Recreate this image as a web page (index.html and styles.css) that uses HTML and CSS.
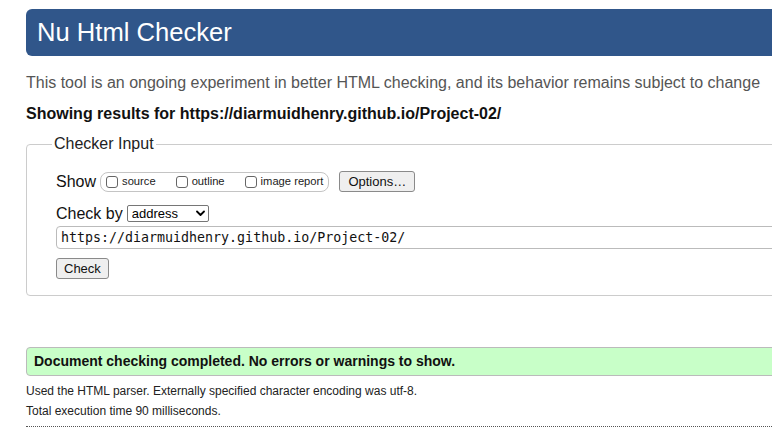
FILE: index.html
```html
<!DOCTYPE html>
<html lang="en">
<head>
<meta charset="utf-8">
<title>Nu Html Checker</title>
<link rel="stylesheet" href="styles.css">
</head>
<body>
<div class="page">
  <h1 class="banner">Nu Html Checker</h1>
  <p class="about">This tool is an ongoing experiment in better HTML checking, and its behavior remains subject to change</p>
  <p class="showing">Showing results for https://diarmuidhenry.github.io/Project-02/</p>
  <form class="checker">
    <fieldset class="input-set">
      <legend>Checker Input</legend>
      <div class="row show-row">
        <span class="lbl">Show</span>
        <div class="show-opts">
          <label class="opt"><input type="checkbox"><span>source</span></label>
          <label class="opt"><input type="checkbox"><span>outline</span></label>
          <label class="opt"><input type="checkbox"><span>image report</span></label>
        </div>
        <button type="button" class="btn options">Options…</button>
      </div>
      <div class="row by-row">
        <span class="lbl">Check by</span>
        <span class="select-wrap">
          <select class="sel"><option>address</option></select>
          <svg class="chev" width="9" height="7" viewBox="0 0 9 7"><path d="M1 1.5 L4.5 5 L8 1.5" fill="none" stroke="#000" stroke-width="1.8" stroke-linecap="round" stroke-linejoin="round"/></svg>
        </span>
      </div>
      <input class="url" type="text" value="https://diarmuidhenry.github.io/Project-02/">
      <div class="submit-row"><button type="button" class="btn check">Check</button></div>
    </fieldset>
  </form>
  <p class="success">Document checking completed. No errors or warnings to show.</p>
  <p class="meta">Used the HTML parser. Externally specified character encoding was utf-8.</p>
  <p class="meta">Total execution time 90 milliseconds.</p>
  <hr class="dotted">
</div>
</body>
</html>
```

FILE: styles.css
```css
html, body {
  margin: 0;
  padding: 0;
  overflow: hidden;
  background: #fff;
}
body {
  font-family: "Liberation Sans", Arial, sans-serif;
  color: #000;
}
.page {
  width: 800px;
  margin-left: 26px;
  padding-top: 9px;
}
.banner {
  margin: 0;
  height: 47px;
  box-sizing: border-box;
  background: #30568a;
  color: #fff;
  font-weight: normal;
  font-size: 25.6px;
  line-height: 46px;
  padding: 0 0 1px 11px;
  border-radius: 6px;
}
.about {
  margin: 18px 0 0;
  font-size: 16px;
  line-height: 18.4px;
  color: #555;
}
.showing {
  margin: 12.5px 0 0;
  font-size: 16px;
  line-height: 18.4px;
  font-weight: bold;
  color: #111;
}
.checker {
  margin: 0;
}
.input-set {
  margin: 12px 0 0;
  border: 1px solid #ccc;
  border-radius: 4px;
  padding: 0 0 16px 29px;
  min-width: 0;
}
.input-set legend {
  padding: 0 2px;
  margin-left: -4px;
  font-size: 16px;
  line-height: 18.4px;
  color: #222;
}
.row {
  display: flex;
  align-items: center;
}
.show-row {
  margin-top: 17.5px;
  height: 21px;
}
.lbl {
  font-size: 16px;
  line-height: 18.4px;
  margin-right: 4px;
  color: #111;
}
.show-opts {
  display: flex;
  align-items: center;
  height: 20px;
  box-sizing: border-box;
  border: 1px solid #c4c4c4;
  border-radius: 8px;
  padding: 0 5px;
}
.opt {
  display: flex;
  align-items: center;
  font-size: 11.2px;
  line-height: 13px;
  margin-right: 20px;
  color: #222;
}
.opt:last-child {
  margin-right: 0;
}
.opt input {
  appearance: none;
  -webkit-appearance: none;
  width: 12px;
  height: 12px;
  margin: 0 4px 0 0;
  border: 1px solid #666;
  border-radius: 3px;
  background: #fff;
  box-sizing: border-box;
}
.btn {
  font-family: "Liberation Sans", Arial, sans-serif;
  font-size: 13px;
  height: 21px;
  padding: 0 8px;
  border: 1px solid #8a8a8a;
  border-radius: 3px;
  background: #efefef;
  color: #111;
  box-sizing: border-box;
}
.options {
  margin-left: 10px;
}
.check {
  padding: 0 7px;
}
.by-row {
  margin-top: 12.5px;
  height: 18.4px;
}
.select-wrap {
  position: relative;
  display: inline-block;
  height: 17px;
}
.sel {
  appearance: none;
  -webkit-appearance: none;
  display: block;
  width: 82px;
  height: 17px;
  box-sizing: border-box;
  border: 1px solid #767676;
  border-radius: 2px;
  padding: 0 0 0 4px;
  margin: 0;
  background: #fff;
  color: #000;
  font-family: "Liberation Sans", Arial, sans-serif;
  font-size: 13px;
}
.chev {
  position: absolute;
  right: 4px;
  top: 5px;
  pointer-events: none;
}
.url {
  display: block;
  margin: 3px 0 0;
  width: 100%;
  height: 23px;
  box-sizing: border-box;
  border: 1px solid #bbb;
  border-radius: 4px;
  padding: 0 4px;
  font-family: "DejaVu Sans Mono", "Liberation Mono", monospace;
  font-size: 13.3px;
  color: #111;
  background: #fff;
}
.submit-row {
  margin-top: 8.5px;
}
.success {
  margin: 51px 0 0;
  background: #c8ffc8;
  border: 1px solid #bbb;
  border-radius: 4px;
  padding: 5.5px 7px;
  font-size: 14px;
  font-weight: bold;
  line-height: 16px;
  color: #111;
}
.meta {
  margin: 0;
  font-size: 12px;
  line-height: 20px;
  color: #222;
}
.success + .meta {
  margin-top: 5.5px;
}
.dotted {
  margin: 4.5px 0 0;
  border: 0;
  border-top: 1px dotted #555;
  height: 0;
}
```
